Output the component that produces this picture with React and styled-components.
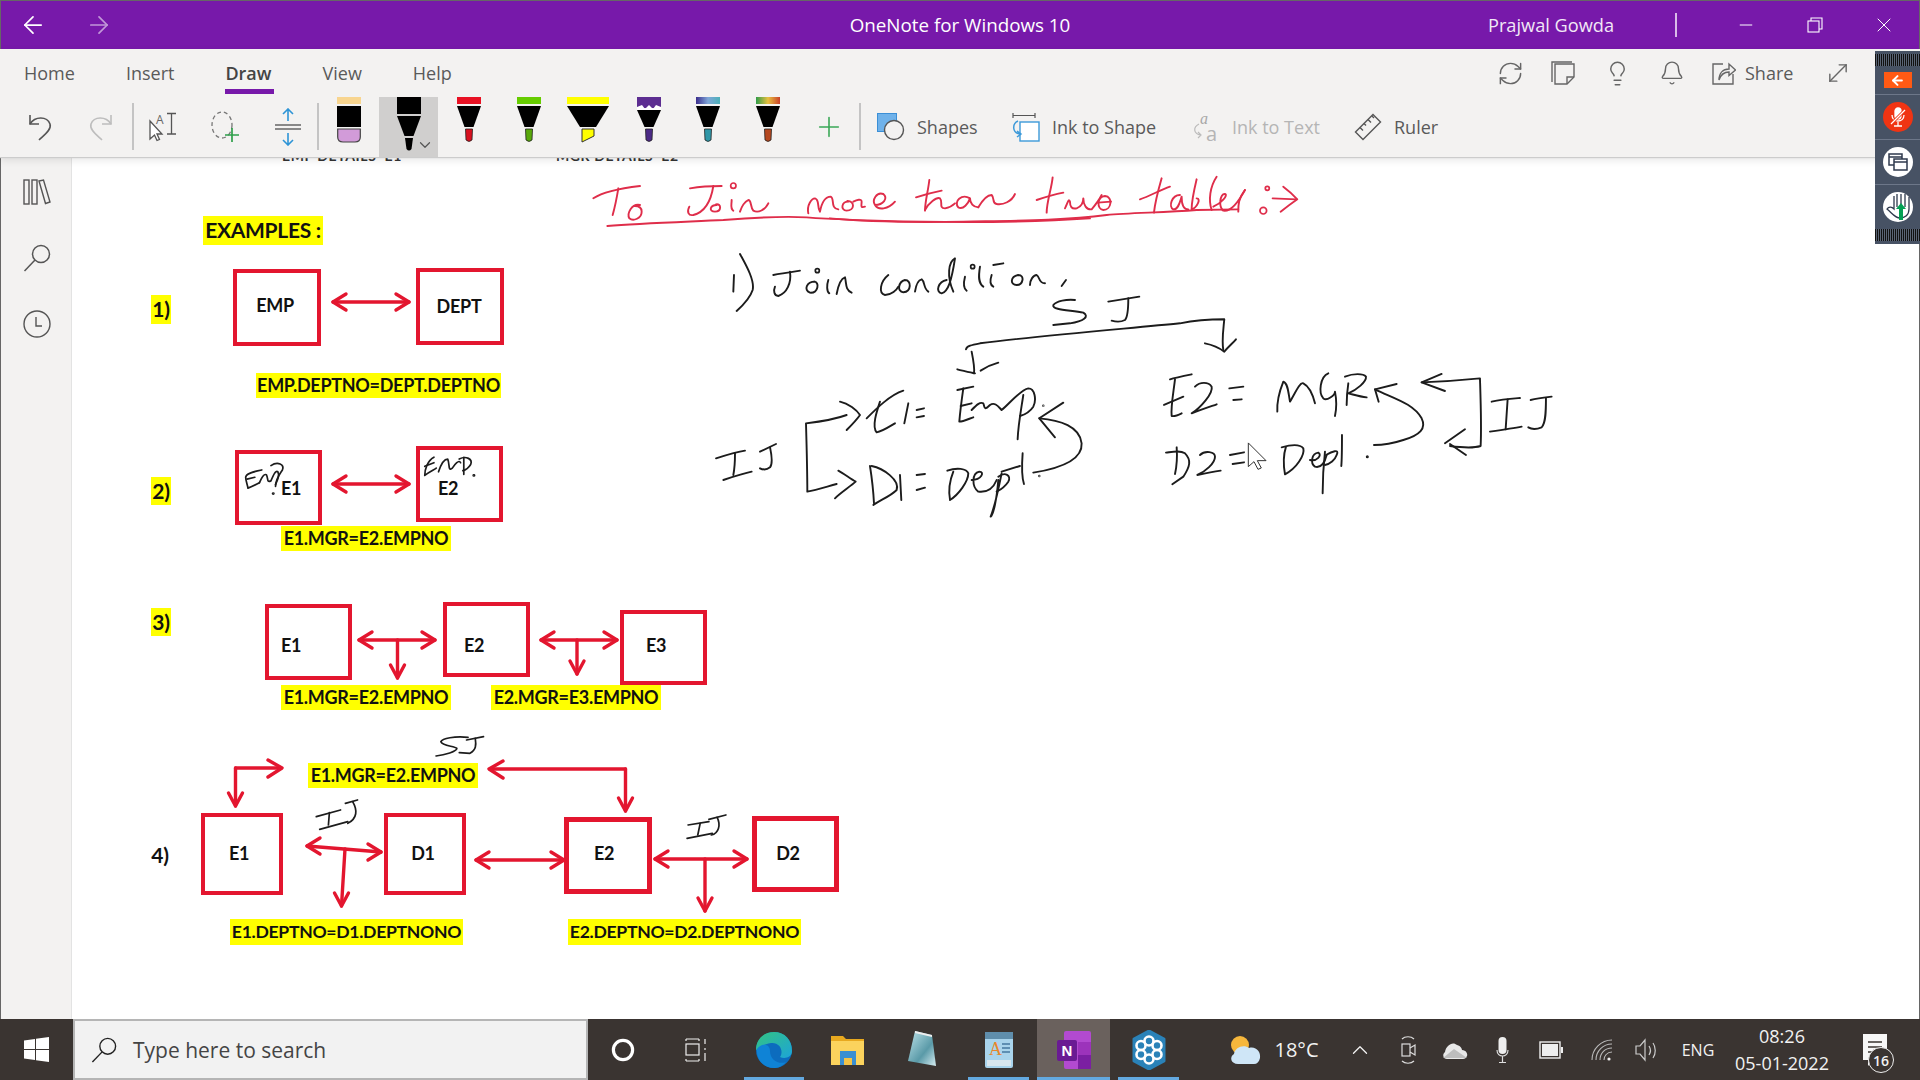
import React from 'react';
import styled, { createGlobalStyle } from 'styled-components';
import { Bell, Lightbulb, RefreshCw, ArrowLeft, ArrowRight, Minus, X, Plus, ChevronDown, ChevronUp, MoveDiagonal } from 'lucide-react';

const UI_FONT = '"Open Sans", "Noto Sans", sans-serif';
const NOTE_FONT = 'Lato, "Liberation Sans", sans-serif';
const RED = '#e3162f';

const GlobalStyle = createGlobalStyle`
  html, body { margin: 0; padding: 0; background: #fff; }
  * { box-sizing: border-box; }
`;

const Win = styled.div`
  position: relative;
  width: 1920px;
  height: 1080px;
  display: flex;
  flex-direction: column;
  overflow: hidden;
  font-family: ${UI_FONT};
  &::after {
    content: '';
    position: absolute;
    inset: 0 0 61px 0;
    border: 1px solid #666;
    border-bottom: 0;
    pointer-events: none;
  }
`;

/* title bar */
const TitleBar = styled.div`
  position: relative;
  height: 49px;
  flex: none;
  background: #7719aa;
  color: #fff;
  display: flex;
  align-items: center;
`;
const NavBtn = styled.div`
  width: ${p => p.$w}px;
  margin-left: ${p => p.$ml || 0}px;
  display: flex;
  justify-content: center;
  opacity: ${p => p.$dim ? 0.55 : 1};
`;
const AppName = styled.div`
  position: absolute;
  left: 0;
  right: 0;
  top: 0;
  bottom: 0;
  display: flex;
  align-items: center;
  justify-content: center;
  font-size: 18.8px;
`;
const UserName = styled.div`
  margin-left: auto;
  font-size: 18.2px;
  width: 126px;
  white-space: nowrap;
  opacity: 0.9;
`;
const TitleSep = styled.div`
  width: 2px;
  height: 24px;
  margin-left: 61px;
  background: #d9bbe8;
`;
const WinBtn = styled.div`
  width: ${p => p.$w}px;
  display: flex;
  justify-content: center;
`;

/* ribbon */
const Ribbon = styled.div`
  position: relative;
  z-index: 3;
  flex: none;
  background: #f3f2f1;
  box-shadow: 0 1px 1px #ccc, 0 3px 8px rgba(0, 0, 0, 0.1);
`;
const TabRow = styled.div`
  height: 48px;
  display: flex;
  align-items: center;
  padding-left: 24px;
  gap: 51px;
`;
const Tab = styled.div`
  position: relative;
  font-size: 18px;
  color: ${p => p.$active ? '#444' : '#5a5a5a'};
  font-weight: ${p => p.$active ? 600 : 400};
  ${p => p.$active && `
    &::after {
      content: '';
      position: absolute;
      left: 0;
      right: -2px;
      top: 28px;
      height: 5px;
      background: #7719aa;
    }
  `}
`;
const RibbonActions = styled.div`
  margin-left: auto;
  display: flex;
  align-items: center;
  margin-right: 37px;
`;
const ActionIcon = styled.div`
  width: ${p => p.$w}px;
  display: flex;
  justify-content: center;
  color: #666;
`;
const ShareText = styled.div`
  font-size: 18px;
  color: #5a5a5a;
  margin-left: 8px;
  width: 48px;
  white-space: nowrap;
`;
const ToolRow = styled.div`
  height: 60px;
  display: flex;
  align-items: stretch;
  padding-left: 10px;
`;
const Slot = styled.div`
  position: relative;
  flex: none;
  width: ${p => p.$w}px;
  display: flex;
  align-items: center;
  justify-content: center;
`;
const PenSlot = styled(Slot)`
  align-items: flex-start;
  background: ${p => p.$selected ? '#d0cfce' : 'transparent'};
`;
const PenChevron = styled.div`
  position: absolute;
  right: 4px;
  bottom: 3px;
  color: #555;
  display: flex;
`;
const ToolSep = styled.div`
  flex: none;
  width: 2px;
  height: 47px;
  margin-top: 6px;
  background: #c4c4c4;
`;
const TextTool = styled.div`
  flex: none;
  width: ${p => p.$w}px;
  padding-left: 16px;
  display: flex;
  align-items: center;
  gap: 12px;
  font-size: 18px;
  white-space: nowrap;
  color: ${p => p.$off ? '#b5b5b5' : '#5a5a5a'};
  svg { overflow: visible; }
`;

/* body */
const Body = styled.div`
  flex: 1;
  min-height: 0;
  display: flex;
`;
const Rail = styled.div`
  flex: none;
  width: 72px;
  background: #f3f2f1;
  border-right: 1px solid #e3e3e3;
  display: flex;
  flex-direction: column;
  align-items: center;
  padding: 20px 0 0 2px;
  gap: 36px;
  color: #555;
`;
const RailIcon = styled.div`
  height: 30px;
  display: flex;
  align-items: center;
`;
const Canvas = styled.div`
  position: relative;
  flex: 1;
  background: #fff;
  overflow: hidden;
`;
const at = p => `left: ${p.$x - 72}px; top: ${p.$y - 157}px;`;
const ClippedTitle = styled.div`
  position: absolute;
  ${at}
  font: 700 14px ${NOTE_FONT};
  letter-spacing: 0.6px;
  color: #333;
  white-space: pre;
`;
const Box = styled.div`
  position: absolute;
  ${at}
  width: ${p => p.$w}px;
  height: ${p => p.$h}px;
  border: ${p => p.$b || 4}px solid ${RED};
`;
const Mark = styled.div`
  position: absolute;
  ${at}
  width: ${p => p.$w}px;
  height: ${p => p.$h}px;
  padding-bottom: 2px;
  background: ${p => p.$plain ? 'transparent' : '#ffff00'};
  color: #111;
  display: flex;
  align-items: center;
  justify-content: center;
  white-space: nowrap;
  font: 700 ${p => p.$fs || 18}px ${NOTE_FONT};
  letter-spacing: -0.3px;
`;
const InkLayer = styled.svg`
  position: absolute;
  left: 0;
  top: 0;
  width: 100%;
  height: 100%;
`;
const InkGroup = styled.g`
  path {
    fill: none;
    stroke: ${p => p.$c || '#1c1c1c'};
    stroke-width: ${p => p.$sw || 1.9}px;
    stroke-linecap: round;
    stroke-linejoin: round;
    vector-effect: non-scaling-stroke;
  }
  circle {
    fill: none;
    stroke: ${p => p.$c || '#1c1c1c'};
    stroke-width: 1.7px;
    vector-effect: non-scaling-stroke;
  }
`;

/* floating meeting panel */
const MeetPanel = styled.div`
  position: absolute;
  z-index: 5;
  left: 1875px;
  top: 51px;
  width: 45px;
  height: 193px;
  background: #475264;
  display: flex;
  flex-direction: column;
  align-items: center;
`;
const Grip = styled.div`
  flex: none;
  width: 100%;
  height: 12px;
  margin: ${p => p.$m};
  background: repeating-linear-gradient(90deg, #111 0 1px, #5a6475 1px 2px);
`;
const PanelRow = styled.div`
  flex: none;
  width: 100%;
  height: ${p => p.$h}px;
  display: flex;
  align-items: center;
  justify-content: center;
  border-bottom: ${p => p.$last ? 0 : '1px solid #6d7789'};
`;
const BackBtn = styled.div`
  width: 28px;
  height: 16px;
  background: #ff5a14;
  color: #fff;
  display: flex;
  align-items: center;
  justify-content: center;
`;
const RoundBtn = styled.div`
  width: 30px;
  height: 30px;
  border-radius: 50%;
  background: ${p => p.$red ? '#f03413' : '#fff'};
  display: flex;
  align-items: center;
  justify-content: center;
`;

/* taskbar */
const Taskbar = styled.div`
  flex: none;
  height: 61px;
  background: #3a3431;
  display: flex;
  align-items: stretch;
  color: #f2f2f2;
`;
const SearchBox = styled.div`
  flex: none;
  width: 515px;
  background: #f2f2f2;
  border: 2px solid #b5b5b5;
  display: flex;
  align-items: center;
  padding-left: 16px;
  gap: 16px;
  font-size: 21px;
  color: #444;
`;
const TaskItem = styled.div`
  position: relative;
  flex: none;
  width: ${p => p.$w}px;
  margin-left: ${p => p.$ml || 0}px;
  display: flex;
  align-items: center;
  justify-content: center;
  background: ${p => p.$active ? '#6a615d' : 'transparent'};
  ${p => p.$open && `
    &::after {
      content: '';
      position: absolute;
      left: 0;
      right: 0;
      bottom: 0;
      height: 3px;
      background: #63a9e0;
    }
  `}
`;
const TrayText = styled.div`
  font-size: ${p => p.$fs || 16}px;
  white-space: nowrap;
`;
const ClockBox = styled.div`
  display: flex;
  flex-direction: column;
  align-items: center;
  gap: 7px;
  font-size: 18px;
  line-height: 20px;
  white-space: nowrap;
`;
const NotifBadge = styled.div`
  position: absolute;
  left: 18px;
  top: 28px;
  width: 26px;
  height: 26px;
  border-radius: 50%;
  background: #3a3431;
  border: 1.5px solid #eee;
  font-size: 14px;
  font-weight: 600;
  display: flex;
  align-items: center;
  justify-content: center;
`;

/* drawings */
const Pen = ({ band, tip, wide, tall, zig }) => {
  const w = wide ? 42 : 24;
  const c = w / 2;
  const top = tall ? 19 : zig ? 13 : 9;
  const neck = tall ? 39 : 30;
  const half = wide ? 8 : 4.5;
  return (
    <svg width={w} height={tall ? 56 : 46} viewBox={`0 0 ${w} ${tall ? 56 : 46}`}>
      <rect x="0" y="0" width={w} height={top - 2} fill={band} />
      {zig && <path d={`M0 10 L5 8 L8 12 L12 8 L16 12 L19 8 L24 10 L24 13 L0 13Z`} fill="#fff" />}
      <path d={`M0 ${top} H${w} L${c + half} ${neck} H${c - half} Z`} fill="#000" />
      {tall
        ? <path d={`M${c - 4} ${neck + 2} H${c + 4} L${c + 2.5} 52 Q${c} 55 ${c - 2.5} 52 Z`} fill="#000" />
        : wide
          ? <path d={`M${c - 6} 32 H${c + 6} V39 L${c - 6} 45 Z`} fill={tip} stroke="#333" strokeWidth="1" />
          : <path d={`M${c - 3.5} 32 H${c + 3.5} L${c + 3} 43 Q${c} 46 ${c - 3} 43 Z`} fill={tip} stroke="#222" strokeWidth="0.8" />}
    </svg>
  );
};

const Eraser = () => (
  <svg width="24" height="46" viewBox="0 0 24 46">
    <rect x="0" y="0" width="24" height="7" fill="#f8d58f" />
    <rect x="0" y="9" width="24" height="21" fill="#000" />
    <path d="M0.7 32 H23.3 V40 Q23.3 45 18 45 H6 Q0.7 45 0.7 40 Z" fill="#d29bd9" stroke="#444" strokeWidth="1.2" />
  </svg>
);

const UndoIcon = ({ color, flip }) => (
  <svg width="24" height="28" viewBox="0 0 24 28" fill="none" stroke={color} strokeWidth="1.6" style={flip ? { transform: 'scaleX(-1)' } : undefined}>
    <path d="M2 2 V11 H11" />
    <path d="M2 11 C7 3 19 3 22 11 C24 17 15 23 11 27" />
  </svg>
);

const LassoText = () => (
  <svg width="30" height="30" viewBox="0 0 30 30" fill="none" stroke="#555" strokeWidth="1.3">
    <path d="M2 9 V27 L6.5 23 L9 28.5 L11.5 27.5 L9 22 L14 22 Z" fill="#fff" />
    <text x="8" y="12" fontSize="12" fill="#666" stroke="none" fontFamily="Open Sans">A</text>
    <path d="M19 1.5 H28 M23.5 1.5 V22 M19 22 H28" />
  </svg>
);

const LassoAdd = () => (
  <svg width="30" height="32" viewBox="0 0 30 32" fill="none">
    <ellipse cx="12" cy="14" rx="10" ry="13" stroke="#777" strokeWidth="1.3" strokeDasharray="4 3" />
    <path d="M22 17 V31 M15 24 H29" stroke="#2ea04b" strokeWidth="1.7" />
  </svg>
);

const SpaceIcon = () => (
  <svg width="28" height="38" viewBox="0 0 28 38" fill="none">
    <path d="M14 1 V13 M9 6 L14 1 L19 6 M14 25 V37 M9 32 L14 37 L19 32" stroke="#2d94d6" strokeWidth="1.6" />
    <path d="M1 17 H27 M1 21 H27" stroke="#666" strokeWidth="1.7" />
  </svg>
);

const ShapesIcon = () => (
  <svg width="28" height="28" viewBox="0 0 28 28">
    <rect x="0.5" y="0.5" width="19" height="18" fill="#6fb2ea" stroke="#3b8fd6" />
    <circle cx="17" cy="17" r="9.5" fill="#f3f2f1" stroke="#555" strokeWidth="1.4" />
  </svg>
);

const InkShapeIcon = () => (
  <svg width="28" height="30" viewBox="0 0 28 30" fill="none">
    <path d="M1 1 V6 M23 1 V6 M1 3.5 H23" stroke="#555" strokeWidth="1.2" />
    <rect x="8" y="10" width="19" height="19" fill="#fff" stroke="#3d9ad9" strokeWidth="1.4" />
    <path d="M6 9 C0 12 0 21 8 22 M5 19 L9 22 L5 25" stroke="#3d9ad9" strokeWidth="1.5" />
  </svg>
);

const InkTextIcon = () => (
  <svg width="28" height="30" viewBox="0 0 28 30" fill="none">
    <text x="8" y="12" fontSize="16" fontStyle="italic" fill="#a8a8a8" fontFamily="Liberation Serif">a</text>
    <text x="14" y="29" fontSize="20" fill="#b5b5b5" fontFamily="Open Sans">a</text>
    <path d="M7 12 C1 15 1 22 9 23 M6 20 L9 23 L6 26" stroke="#bbb" strokeWidth="1.2" />
  </svg>
);

const RulerIcon = () => (
  <svg width="28" height="28" viewBox="0 0 28 28" fill="none" stroke="#555" strokeWidth="1.4">
    <path d="M1.5 19 L19 1.5 L26.5 9 L9 26.5 Z" />
    <path d="M6 14.5 L9 17.5 M10 10.5 L12 12.5 M14 6.5 L17 9.5 M18 3 L20 5" />
  </svg>
);

const StickyIcon = () => (
  <svg width="24" height="24" viewBox="0 0 24 24" fill="none" stroke="#666" strokeWidth="1.4">
    <path d="M4 3 H23 V16 L16 23 H4 Z" />
    <path d="M16 23 V16 H23" />
    <path d="M1 21 V1 H21" />
  </svg>
);

const ShareIcon = () => (
  <svg width="24" height="24" viewBox="0 0 24 24" fill="none" stroke="#666" strokeWidth="1.4">
    <path d="M11 3 H1 V23 H21 V13" />
    <path d="M7 19 C7 12 11 8 17 8 V3 L23.5 9 L17 14.5 V11 C13 11 9 13 7 19 Z" fill="#f3f2f1" />
  </svg>
);

const LibraryIcon = () => (
  <svg width="28" height="26" viewBox="0 0 28 26" fill="none" stroke="#555" strokeWidth="1.4">
    <rect x="1" y="1" width="5" height="24" />
    <rect x="9" y="1" width="5" height="24" />
    <path d="M16 2 L20.5 1 L27 23 L22.5 24.5 Z" />
  </svg>
);

const SearchGlass = ({ size = 28, color = '#555' }) => (
  <svg width={size} height={size} viewBox="0 0 28 28" fill="none" stroke={color} strokeWidth="1.5">
    <circle cx="18" cy="10" r="8.5" />
    <path d="M12 16 L1.5 27" />
  </svg>
);

const ClockIcon = () => (
  <svg width="28" height="28" viewBox="0 0 28 28" fill="none" stroke="#555" strokeWidth="1.4">
    <circle cx="14" cy="14" r="13" />
    <path d="M13 7 V16 H19" />
  </svg>
);

const MicOff = () => (
  <svg width="20" height="20" viewBox="0 0 20 20" fill="none" stroke="#fff" strokeWidth="1.3">
    <rect x="7" y="1" width="6" height="11" rx="3" fill="#fff" />
    <path d="M4 8 C4 16 16 16 16 8 M10 15 V19 M6 19 H14" />
    <path d="M3 17 L17 3" stroke="#f03413" strokeWidth="3" />
    <path d="M3 17 L17 3" />
  </svg>
);

const WindowsIcon = () => (
  <svg width="20" height="18" viewBox="0 0 20 18" fill="none" stroke="#2f3a4d" strokeWidth="1.5">
    <rect x="1" y="1" width="13" height="11" />
    <rect x="6" y="6" width="13" height="11" fill="#fff" />
    <path d="M6 9 H19 M1 4 H14" />
  </svg>
);

const HandIcon = () => (
  <svg width="26" height="28" viewBox="0 0 26 28" fill="none">
    <path d="M12 1 V14 M16 1 V14 M20 1 V14 M24 4 V16 C24 22 20 25 15 25 C10 25 7 20 2 16 C4 13 7 14 9 16 V3" stroke="#2f3a4d" strokeWidth="1.3" />
    <path d="M16 10 L21 16 H18 V27 H14 V16 H11 Z" fill="#04a054" />
  </svg>
);

const WinLogo = () => (
  <svg width="25" height="25" viewBox="0 0 25 25" fill="#fff">
    <path d="M0 3.6 L11 2 V12 H0 Z M12 1.8 L25 0 V12 H12 Z M0 13 H11 V23 L0 21.4 Z M12 13 H25 V25 L12 23.2 Z" />
  </svg>
);

const CortanaRing = () => (
  <svg width="24" height="24" viewBox="0 0 24 24" fill="none" stroke="#fff" strokeWidth="3.2">
    <circle cx="12" cy="12" r="9.6" />
  </svg>
);

const TaskViewIcon = () => (
  <svg width="26" height="24" viewBox="0 0 26 24" fill="none" stroke="#eee" strokeWidth="1.2">
    <rect x="4" y="6" width="13" height="11" />
    <path d="M4 1 H17 M4 3 V1 M17 3 V1 M4 23 H17 M4 21 V23 M17 21 V23 M23 1 V6 M23 10 V12 M23 15 V23" />
  </svg>
);

const EdgeIcon = () => (
  <svg width="38" height="38" viewBox="0 0 38 38">
    <defs>
      <linearGradient id="edgeA" x1="0" y1="0" x2="1" y2="1">
        <stop offset="0" stopColor="#33c481" />
        <stop offset="1" stopColor="#1da4d8" />
      </linearGradient>
    </defs>
    <circle cx="19" cy="19" r="18" fill="#0c6cbe" />
    <path d="M1 19 C1 7 10 1 19 1 C30 1 37 9 37 20 C37 27 29 28 25 26 C29 20 25 11 16 12 C8 13 3 18 1 19 Z" fill="url(#edgeA)" />
    <path d="M15 20 C15 29 24 34 31 31 C27 36 22 37 19 37 C9 37 1 29 2 18 C6 12 15 12 15 20 Z" fill="#0f83d6" />
  </svg>
);

const FolderIcon = () => (
  <svg width="34" height="32" viewBox="0 0 34 32">
    <path d="M0 2 H12 L15 5 H33 V31 H0 Z" fill="#e8a91f" />
    <rect x="0" y="7" width="33" height="24" fill="#fbd35d" />
    <rect x="9" y="17" width="16" height="14" fill="#3a8fd2" />
    <rect x="13" y="24" width="8" height="7" fill="#f3c347" />
  </svg>
);

const NoteIcon = () => (
  <svg width="32" height="40" viewBox="0 0 32 40">
    <defs>
      <linearGradient id="noteA" x1="0" y1="0" x2="1" y2="1">
        <stop offset="0" stopColor="#bfe4ea" />
        <stop offset="0.6" stopColor="#5a9aa8" />
        <stop offset="1" stopColor="#d8eef2" />
      </linearGradient>
    </defs>
    <path d="M10 1 L27 5 L31 36 L3 31 Z" fill="url(#noteA)" />
    <path d="M10 1 L27 5 L27 7 L10 3 Z" fill="#eee" />
  </svg>
);

const WordpadIcon = () => (
  <svg width="32" height="40" viewBox="0 0 32 40">
    <rect x="2" y="2" width="28" height="36" rx="2" fill="#a9d4ec" />
    <rect x="2" y="2" width="28" height="7" fill="#5f8eac" />
    <rect x="4" y="30" width="24" height="6" fill="#d8e6ee" />
    <text x="6" y="25" fontSize="18" fontFamily="Liberation Serif" fill="#e8872a">A</text>
    <path d="M19 14 H27 M19 18 H27 M19 22 H27" stroke="#4678a0" strokeWidth="1.4" />
  </svg>
);

const OneNoteIcon = () => (
  <svg width="36" height="40" viewBox="0 0 36 40">
    <rect x="8" y="1" width="27" height="38" rx="2" fill="#b24ad0" />
    <rect x="22" y="12" width="13" height="13" fill="#9c33bb" />
    <rect x="22" y="25" width="13" height="14" fill="#7b1fa2" />
    <rect x="1" y="10" width="20" height="21" rx="2" fill="#6a1b93" />
    <text x="11" y="26" fontSize="15" fontWeight="700" textAnchor="middle" fontFamily="Liberation Sans" fill="#fff">N</text>
  </svg>
);

const FlowerIcon = () => (
  <svg width="36" height="40" viewBox="0 0 36 40">
    <path d="M18 1 L33 9 V31 L18 39 L3 31 V9 Z" fill="#2a82b8" stroke="#2a82b8" strokeWidth="3" strokeLinejoin="round" />
    <g fill="none" stroke="#fff" strokeWidth="2.6">
      <circle cx="18" cy="11" r="4.5" />
      <circle cx="18" cy="29" r="4.5" />
      <circle cx="10" cy="15.5" r="4.5" />
      <circle cx="26" cy="15.5" r="4.5" />
      <circle cx="10" cy="24.5" r="4.5" />
      <circle cx="26" cy="24.5" r="4.5" />
    </g>
  </svg>
);

const WeatherIcon = () => (
  <svg width="32" height="30" viewBox="0 0 32 30">
    <circle cx="11" cy="10" r="9" fill="#f6b73c" />
    <path d="M9 29 C2 29 0 22 5 19 C6 12 15 9 20 13 C27 11 32 17 31 23 C30 27 28 29 25 29 Z" fill="#cfe6f7" />
  </svg>
);

const MeetIcon = () => (
  <svg width="18" height="30" viewBox="0 0 18 30" fill="none" stroke="#ddd" strokeWidth="1.2">
    <path d="M3 4 C6 1 12 1 15 4 M3 26 C6 29 12 29 15 26" />
    <rect x="3" y="9" width="8" height="12" />
    <path d="M11 13 L16 10 V20 L11 17" />
  </svg>
);

const CloudIcon = () => (
  <svg width="26" height="20" viewBox="0 0 26 20">
    <path d="M5 19 C1 19 0 14 3 12 C4 5 11 1 15 5 C19 6 20 9 20 10 C24 10 26 14 25 16 C24 18 23 19 21 19 Z" fill="#e8e8e8" />
    <path d="M1 18 L12 9 L25 18 Z" fill="#bdbdbd" />
  </svg>
);

const MicIcon = () => (
  <svg width="13" height="26" viewBox="0 0 13 26">
    <rect x="2.5" y="0" width="8" height="17" rx="4" fill="#eee" />
    <path d="M1 13 C1 21 12 21 12 13 M6.5 19 V25.5 M3 25.5 H10" fill="none" stroke="#ddd" strokeWidth="1.2" />
  </svg>
);

const BatteryIcon = () => (
  <svg width="24" height="18" viewBox="0 0 24 18">
    <rect x="1" y="1" width="20" height="16" fill="none" stroke="#eee" strokeWidth="1.4" />
    <rect x="3" y="3" width="16" height="12" fill="#eee" />
    <rect x="22" y="6" width="2" height="6" fill="#eee" />
  </svg>
);

const WifiIcon = () => (
  <svg width="24" height="24" viewBox="0 0 24 24" fill="none" stroke="#bbb" strokeWidth="1.1">
    <path d="M2 22 C2 11 11 2 22 2 M6 22 C6 13 13 6 22 6 M10 22 C10 15 15 10 22 10" />
    <path d="M14 22 C14 18 17 14 22 14" />
    <circle cx="19" cy="21" r="1.6" fill="#eee" stroke="none" />
  </svg>
);

const VolumeIcon = () => (
  <svg width="26" height="26" viewBox="0 0 26 26" fill="none" stroke="#ccc" strokeWidth="1.2">
    <path d="M2 9 H6 L11 3 V23 L6 17 H2 Z" />
    <path d="M15 9 C17 12 17 15 15 18 M19 6 C22 10 22 17 19 21" />
  </svg>
);

const NotifIcon = () => (
  <svg width="24" height="32" viewBox="0 0 24 32">
    <path d="M0 0 H24 V26 H10 L5 32 V26 H0 Z" fill="#f7f7f7" />
    <path d="M5 8 H19 M5 13 H19 M5 18 H15" stroke="#3a3431" strokeWidth="1.4" />
  </svg>
);

/* diagram data, all in page pixels */
const BOXES = [
  { x: 233, y: 269, w: 88, h: 77 }, { x: 416, y: 268, w: 88, h: 77 },
  { x: 235, y: 450, w: 87, h: 75 }, { x: 416, y: 446, w: 87, h: 76 },
  { x: 265, y: 604, w: 87, h: 76 }, { x: 443, y: 602, w: 87, h: 75 }, { x: 620, y: 610, w: 87, h: 75 },
  { x: 201, y: 813, w: 82, h: 82 }, { x: 384, y: 813, w: 82, h: 82 },
  { x: 564, y: 817, w: 88, h: 77, b: 5 }, { x: 752, y: 816, w: 87, h: 76, b: 5 },
];
const MARKS = [
  { t: 'EXAMPLES :', x: 203, y: 216, w: 120, h: 29, fs: 21 },
  { t: '1)', x: 151, y: 295, w: 20, h: 29, fs: 21 },
  { t: '2)', x: 151, y: 477, w: 20, h: 28, fs: 21 },
  { t: '3)', x: 151, y: 608, w: 20, h: 28, fs: 21 },
  { t: 'EMP.DEPTNO=DEPT.DEPTNO', x: 256, y: 373, w: 245, h: 25 },
  { t: 'E1.MGR=E2.EMPNO', x: 281, y: 526, w: 170, h: 25 },
  { t: 'E1.MGR=E2.EMPNO', x: 281, y: 685, w: 170, h: 25 },
  { t: 'E2.MGR=E3.EMPNO', x: 491, y: 685, w: 170, h: 25 },
  { t: 'E1.MGR=E2.EMPNO', x: 308, y: 763, w: 170, h: 25 },
  { t: 'E1.DEPTNO=D1.DEPTNONO', x: 230, y: 919, w: 233, h: 26, fs: 17.6 },
  { t: 'E2.DEPTNO=D2.DEPTNONO', x: 568, y: 919, w: 233, h: 26, fs: 17.6 },
  { t: 'EMP', x: 255, y: 296, w: 40, h: 20, plain: 1 },
  { t: 'DEPT', x: 437, y: 297, w: 44, h: 20, plain: 1 },
  { t: 'E1', x: 279, y: 479, w: 24, h: 20, plain: 1 },
  { t: 'E2', x: 436, y: 479, w: 24, h: 20, plain: 1 },
  { t: 'E1', x: 279, y: 636, w: 24, h: 20, plain: 1 },
  { t: 'E2', x: 462, y: 636, w: 24, h: 20, plain: 1 },
  { t: 'E3', x: 644, y: 636, w: 24, h: 20, plain: 1 },
  { t: '4)', x: 150, y: 843, w: 20, h: 24, plain: 1, fs: 21 },
  { t: 'E1', x: 227, y: 844, w: 24, h: 20, plain: 1 },
  { t: 'D1', x: 411, y: 844, w: 24, h: 20, plain: 1 },
  { t: 'E2', x: 592, y: 844, w: 24, h: 20, plain: 1 },
  { t: 'D2', x: 776, y: 844, w: 24, h: 20, plain: 1 },
];

const dblArrow = (x1, y1, x2, y2, s = 13, h = 8) => [
  `M${x1} ${y1} L${x2} ${y2}`,
  `M${x1 + s} ${y1 - h} L${x1} ${y1} L${x1 + s} ${y1 + h}`,
  `M${x2 - s} ${y2 - h} L${x2} ${y2} L${x2 - s} ${y2 + h}`,
];
const downTo = (x1, y1, x2, y2, h = 7, s = 13) => [
  `M${x1} ${y1} L${x2} ${y2}`,
  `M${x2 - h} ${y2 - s} L${x2} ${y2} L${x2 + h} ${y2 - s}`,
];

const RED_ARROWS = [
  ...dblArrow(333, 302, 409, 302),
  ...dblArrow(333, 484, 409, 484),
  ...dblArrow(359, 640, 435, 640),
  ...downTo(397.5, 640, 397.5, 678),
  ...dblArrow(541, 640, 617, 640),
  ...downTo(577, 640, 577, 674),
  'M235.5 768 L281 768', 'M268 760 L282 768 L268 777',
  ...downTo(235.5, 768, 235.5, 806),
  'M490 769 L625.5 769', 'M503 761 L489 769 L503 778',
  ...downTo(625.5, 769, 625.5, 811),
  ...dblArrow(307, 846, 381, 852),
  ...downTo(345, 849, 341.5, 906),
  ...dblArrow(476, 860, 564, 860),
  ...dblArrow(655, 859, 747, 859),
  ...downTo(705, 859, 705, 911),
];

// ink traced from the note, each list in its own local scale
const TITLE_A = [
  'M10 85 C40 65 90 55 150 48', 'M85 55 C80 85 75 110 68 135',
  'M150 105 C125 100 110 130 118 145 C130 155 155 145 155 125 C155 115 150 108 135 108',
  'M300 55 C330 50 365 48 395 48', 'M370 48 C365 80 350 125 310 135 C295 138 290 125 298 110',
  'M380 105 C360 105 355 125 375 125 C395 125 395 100 378 103',
  'M425 90 C425 105 420 115 430 122',
  'M450 125 C455 110 465 95 475 90 C485 90 480 110 490 122 C505 130 525 120 535 100',
  'M655 130 C650 105 665 85 675 85 C690 90 680 110 690 125 C695 100 705 80 722 80 C735 85 720 115 745 118',
  'M775 95 C755 95 750 120 770 122 C795 122 795 92 772 93',
  'M790 95 C800 90 815 85 815 95 C815 105 810 115 825 110',
  'M855 105 C880 105 895 85 880 72 C860 65 845 90 855 105 C865 122 895 118 915 95',
  'M52 168 C150 160 300 155 400 150 C500 142 580 138 650 142 C750 150 850 152 1000 155 C1200 158 1350 155 1500 145',
];
const TITLE_B = [
  'M258 82 C290 72 320 65 335 62', 'M298 30 C295 60 285 95 285 122',
  'M285 120 C295 100 320 80 330 85 C340 95 325 115 345 115 C360 112 370 105 375 100',
  'M420 85 C395 70 370 95 385 112 C400 120 415 100 420 85 C420 100 430 112 445 112',
  'M445 112 C455 95 470 75 485 75 C495 85 485 100 500 102 C520 105 545 95 555 72',
  'M620 90 C650 80 680 72 700 68', 'M668 22 C665 55 650 95 650 128',
  'M705 115 C715 95 715 85 720 95 C720 110 725 118 740 115 C755 110 760 95 760 85 C760 105 770 120 785 118 C800 100 810 85 815 75',
  'M825 78 C800 80 800 118 820 120 C845 120 850 80 825 78', 'M803 98 L843 95',
  'M930 88 C960 78 990 60 1020 50', 'M995 25 C985 60 975 100 972 128',
  'M1050 75 C1025 75 1015 110 1030 118 C1045 120 1050 95 1055 80 C1055 100 1060 118 1075 118',
  'M1100 28 C1090 70 1085 100 1085 118 C1100 115 1115 85 1100 85',
  'M1160 20 C1140 50 1135 90 1145 120',
  'M1150 110 C1175 100 1195 75 1185 72 C1170 70 1165 110 1180 122 C1195 125 1215 115 1245 60',
  'M1225 125 C1225 105 1225 85 1245 60',
  'M0 145 C100 155 200 158 400 155 C550 152 700 152 830 135 C900 128 1000 128 1100 120 L1225 118',
  'M1328 85 L1400 88', 'M1360 50 C1380 65 1395 80 1402 88 C1385 100 1365 115 1352 125',
];
const COND_A = [
  'M432 315 L430 365', 'M450 252 C465 280 495 330 488 360 C480 385 460 405 440 423',
  'M550 315 C575 310 610 305 630 302', 'M600 305 C605 340 590 370 565 378 C552 378 550 362 555 350',
  'M675 335 C650 335 640 360 660 368 C685 370 690 335 672 335',
  'M715 330 C710 345 710 365 718 370',
  'M740 372 C745 345 755 325 765 322 C770 340 765 360 785 368',
];
const COND_B = [
  'M175 315 C150 335 145 370 165 375 C185 375 200 360 205 350',
  'M225 330 C205 335 200 365 220 367 C245 365 245 330 225 330',
  'M255 365 C258 345 265 330 275 328 C285 335 280 355 295 365',
  'M350 330 C325 335 315 365 335 370 C355 365 365 330 375 265 C355 275 350 320 370 365',
  'M405 320 C400 340 400 355 410 362',
  'M450 290 C445 320 445 340 460 350', 'M490 285 L520 280',
  'M485 315 C480 330 480 345 490 350',
  'M565 315 C540 320 540 345 560 345 C580 345 585 315 565 315',
  'M600 345 C600 330 610 315 620 315 C630 320 625 340 645 340',
  'M708 330 L695 348',
  'M735 390 C710 388 680 392 670 405 C665 420 720 420 760 428 C780 440 760 455 720 460 L670 465',
  'M835 395 L928 380', 'M895 385 C895 410 895 440 885 450 C870 458 855 455 845 452',
  'M408 538 C410 528 425 525 450 520 C600 500 900 475 1050 460 C1090 452 1130 448 1183 448 C1180 480 1175 510 1180 540',
  'M1125 520 C1150 525 1170 535 1183 545 C1195 530 1210 518 1218 508',
];
const LEFT_SET = [
  'M815 35 C820 60 825 85 822 100', 'M772 88 C790 92 810 98 825 100', 'M842 92 C860 80 880 72 895 68',
  'M500 235 C530 205 570 165 610 152', 'M540 185 C530 215 515 260 530 277 C545 275 565 262 585 250',
  'M625 190 L613 250', 'M650 210 L672 205', 'M650 232 L672 228',
  'M772 150 L820 140', 'M790 145 C785 180 780 220 778 245 C790 245 810 235 820 232', 'M782 198 L815 190',
  'M815 210 C830 195 840 185 850 190 C855 200 850 215 870 195 C885 185 895 200 905 210 C925 195 960 150 985 145 C1005 145 1010 180 1000 200 C990 215 970 225 960 228',
  'M970 165 C965 200 955 250 953 298',
  'M1090 188 L1018 235 L1065 292', 'M1018 235 C1080 240 1140 260 1145 310 C1148 360 1080 385 1000 398',
  'M48 355 C80 345 115 335 135 332', 'M105 340 C105 370 102 395 100 405', 'M70 420 C100 410 130 400 155 395',
  'M180 335 L228 312', 'M210 322 C215 345 220 370 210 382 C200 390 190 390 180 385',
  'M440 225 C400 240 360 245 318 250 C320 320 322 400 322 455 C350 450 380 440 410 432',
  'M420 185 C445 190 470 210 480 225 C470 240 455 255 440 270',
  'M415 392 C430 400 450 415 467 425 C450 440 420 460 405 475',
  'M510 378 C515 410 520 450 522 490', 'M515 378 C550 385 600 420 590 450 C570 470 540 480 520 495',
  'M600 405 L604 480', 'M650 405 L675 402', 'M650 450 L675 443',
  'M760 395 C750 420 745 450 750 478', 'M742 392 C770 382 800 385 805 400 C805 425 775 465 750 480',
  'M815 420 C845 420 855 395 838 395 C815 400 815 440 835 455 C860 458 880 445 890 420',
  'M905 400 C895 450 880 510 872 530 C880 525 890 480 895 420',
  'M895 410 C915 395 935 405 925 425 C915 440 900 450 890 455',
  'M968 340 C965 380 965 410 972 432', 'M905 395 L960 378',
];
const RIGHT_SET = [
  'M155 103 C130 108 105 113 90 118', 'M105 118 C100 160 92 200 95 228 C105 230 115 225 125 220', 'M72 195 L130 170',
  'M165 140 C180 125 205 125 215 140 C220 160 180 205 155 220 C180 210 210 200 230 193',
  'M268 145 L310 140', 'M280 180 L305 178',
  'M412 215 C410 180 420 150 430 125 C445 130 445 160 450 185 C465 160 480 125 490 130 C510 140 520 170 525 190',
  'M565 100 C540 110 535 160 550 175 C560 185 585 165 585 155 C590 180 590 205 585 228',
  'M625 130 C622 150 620 175 620 195', 'M615 110 C640 100 670 100 678 110 C680 125 650 150 625 160 C645 165 660 170 680 172',
  'M770 132 L705 148 L716 185', 'M705 148 C760 175 820 190 845 235 C860 265 840 285 790 300 C760 310 730 315 702 315',
  'M905 102 L845 127 L915 153', 'M845 127 C900 125 970 120 1020 115 C1022 180 1025 260 1022 318 C1000 325 960 322 930 318',
  'M975 268 L915 310', 'M930 312 L978 345',
  'M1055 185 C1085 178 1115 176 1140 174', 'M1103 178 L1097 268', 'M1050 275 C1085 270 1120 265 1145 260',
  'M1172 180 C1195 175 1220 172 1235 170', 'M1218 175 C1218 210 1218 250 1205 262 C1190 268 1175 268 1165 262',
  'M78 338 C100 335 120 330 135 340 C155 360 150 380 130 410 L97 433', 'M110 322 C112 350 110 380 105 402',
  'M180 345 C195 330 225 335 225 350 C225 370 195 395 172 405 C195 400 220 395 242 392',
  'M270 345 L312 337', 'M278 372 L312 367',
  'M425 322 C450 315 480 312 490 325 C495 345 470 385 435 403 C430 375 430 345 438 320',
  'M510 360 C530 365 548 345 535 338 C515 340 510 370 525 380 C545 385 555 365 560 345',
  'M555 335 C550 380 548 420 548 460', 'M558 345 C575 335 600 325 590 345 C585 360 570 372 555 375',
  'M606 285 C606 320 606 355 604 378',
];
const BOX_NOTES = [
  'M570 880 C550 885 535 890 535 900 C535 910 540 925 540 930 C550 925 555 922 565 915', 'M538 905 L555 900',
  'M565 915 C570 900 575 890 580 893 C585 905 580 915 590 910 C595 895 600 880 605 885 C610 895 600 920 600 920',
  'M590 868 C605 855 620 865 615 880 C610 890 600 905 600 925',
  'M945 845 C930 855 925 880 925 895 C935 885 945 880 950 875', 'M925 870 L945 860',
  'M955 885 C960 865 968 850 975 850 C980 865 975 885 985 875 C990 865 1000 850 1003 860',
  'M1010 845 L1010 892', 'M1000 850 C1015 840 1030 850 1025 865 C1020 875 1015 880 1008 882',
];
const ROW4_NOTES = [
  'M718 52 C690 48 665 55 662 65 C665 78 690 78 695 85 C695 95 670 105 652 108',
  'M715 60 L750 50', 'M733 55 C735 75 735 90 722 100 L700 98',
  'M405 290 L455 270', 'M432 278 L430 315', 'M412 328 L470 305',
  'M465 250 L490 240', 'M480 245 C490 270 490 295 470 310',
  'M1172 315 L1215 305', 'M1197 310 L1192 345', 'M1170 355 L1222 340',
  'M1215 298 L1250 285', 'M1232 292 C1240 315 1235 340 1220 345',
];

const Strokes = ({ list }) => list.map((d, i) => <path key={i} d={d} />);

const NoteCanvas = () => (
  <Canvas>
    <ClippedTitle $x={282} $y={147}>EMP DETAILS  E1</ClippedTitle>
    <ClippedTitle $x={556} $y={147}>MGR DETAILS  E2</ClippedTitle>
    {BOXES.map((b, i) => <Box key={i} $x={b.x} $y={b.y} $w={b.w} $h={b.h} $b={b.b} />)}
    {MARKS.map((m, i) => (
      <Mark key={i} $x={m.x} $y={m.y} $w={m.w} $h={m.h} $plain={m.plain} $fs={m.fs}>{m.t}</Mark>
    ))}
    <InkLayer viewBox="72 157 1848 862">
      <InkGroup $c={RED} $sw={3.4}><Strokes list={RED_ARROWS} /></InkGroup>
      <InkGroup $c="#df2d4a" $sw={1.9}>
        <g transform="translate(590 170) scale(0.3333)">
          <Strokes list={TITLE_A} />
          <circle cx="430" cy="47" r="8" />
        </g>
        <g transform="translate(830 170) scale(0.3333)">
          <Strokes list={TITLE_B} />
          <circle cx="1312" cy="55" r="6" />
          <circle cx="1300" cy="122" r="10" />
        </g>
      </InkGroup>
      <InkGroup>
        <g transform="translate(590 170) scale(0.3333)">
          <Strokes list={COND_A} />
          <circle cx="682" cy="302" r="6" />
        </g>
        <g transform="translate(830 170) scale(0.3333)">
          <Strokes list={COND_B} />
          <circle cx="428" cy="290" r="6" />
        </g>
        <g transform="translate(700 340) scale(0.3333)">
          <Strokes list={LEFT_SET} />
          <circle cx="1030" cy="197" r="1" />
          <circle cx="1018" cy="408" r="1" />
        </g>
        <g transform="translate(1140 340) scale(0.3333)">
          <Strokes list={RIGHT_SET} />
          <circle cx="682" cy="350" r="2" />
          <path d="M325 310 L325 380 L342 365 L354 388 L364 384 L352 362 L377 362 Z" style={{ strokeWidth: 1, fill: '#fff', stroke: '#333' }} />
        </g>
      </InkGroup>
      <InkGroup $sw={1.7}>
        <g transform="translate(0 150) scale(0.4592 0.3636)">
          <Strokes list={BOX_NOTES} />
          <circle cx="595" cy="945" r="1.5" />
          <circle cx="1032" cy="895" r="1.5" />
        </g>
        <g transform="translate(120 720) scale(0.4847 0.3333)">
          <Strokes list={ROW4_NOTES} />
        </g>
      </InkGroup>
    </InkLayer>
  </Canvas>
);

const PENS = [
  { w: 61, band: '#e81123', tip: '#d8101f' },
  { w: 59, band: '#66cc00', tip: '#58a80a' },
  { w: 60, band: '#ffff00', tip: '#ffff00', wide: true },
  { w: 61, band: '#5c2d91', tip: '#4b2a86', zig: true },
  { w: 58, band: 'url(#penGalaxy)', tip: '#2f97a8' },
  { w: 62, band: 'url(#penRainbow)', tip: '#b5481f' },
];

const App = () => (
  <Win>
    <GlobalStyle />
    <TitleBar>
      <NavBtn $w={34} $ml={16}><ArrowLeft size={28} strokeWidth={1.5} /></NavBtn>
      <NavBtn $w={34} $ml={32} $dim><ArrowRight size={28} strokeWidth={1.5} /></NavBtn>
      <AppName>OneNote for Windows 10</AppName>
      <UserName>Prajwal Gowda</UserName>
      <TitleSep />
      <WinBtn $w={138}><Minus size={20} strokeWidth={1.2} /></WinBtn>
      <WinBtn $w={0}>
        <svg width="16" height="16" viewBox="0 0 16 16" fill="none" stroke="#fff" strokeWidth="1.1" style={{ flex: 'none' }}>
          <rect x="1" y="4" width="11" height="11" />
          <path d="M4 4 V1 H15 V12 H12" />
        </svg>
      </WinBtn>
      <WinBtn $w={69} />
      <WinBtn $w={0}><X size={24} strokeWidth={1} style={{ flex: 'none' }} /></WinBtn>
      <WinBtn $w={36} />
    </TitleBar>
    <Ribbon>
      <TabRow>
        <Tab>Home</Tab>
        <Tab>Insert</Tab>
        <Tab $active>Draw</Tab>
        <Tab>View</Tab>
        <Tab>Help</Tab>
        <RibbonActions>
          <ActionIcon $w={30}><RefreshCw size={27} strokeWidth={1.3} /></ActionIcon>
          <ActionIcon $w={76}><StickyIcon /></ActionIcon>
          <ActionIcon $w={32}><Lightbulb size={27} strokeWidth={1.3} /></ActionIcon>
          <ActionIcon $w={78}><Bell size={26} strokeWidth={1.3} /></ActionIcon>
          <ActionIcon $w={26}><ShareIcon /></ActionIcon>
          <ShareText>Share</ShareText>
          <ActionIcon $w={90}><MoveDiagonal size={28} strokeWidth={1.2} /></ActionIcon>
        </RibbonActions>
      </TabRow>
      <ToolRow>
        <svg width="0" height="0" style={{ position: 'absolute' }}>
          <defs>
            <linearGradient id="penGalaxy"><stop offset="0" stopColor="#3a2d8c" /><stop offset="0.5" stopColor="#7fa6d8" /><stop offset="1" stopColor="#4bb0b8" /></linearGradient>
            <linearGradient id="penRainbow"><stop offset="0" stopColor="#2f9c4a" /><stop offset="0.5" stopColor="#e8c040" /><stop offset="1" stopColor="#c8402a" /></linearGradient>
          </defs>
        </svg>
        <Slot $w={60}><UndoIcon color="#555" /></Slot>
        <Slot $w={62}><UndoIcon color="#bdbdbd" flip /></Slot>
        <ToolSep />
        <Slot $w={58}><LassoText /></Slot>
        <Slot $w={66}><LassoAdd /></Slot>
        <Slot $w={59}><SpaceIcon /></Slot>
        <ToolSep />
        <PenSlot $w={60}><Eraser /></PenSlot>
        <PenSlot $w={59} $selected>
          <Pen band="#000" tall />
          <PenChevron><ChevronDown size={18} strokeWidth={1.6} /></PenChevron>
        </PenSlot>
        {PENS.map((p, i) => (
          <PenSlot key={i} $w={p.w}><Pen band={p.band} tip={p.tip} wide={p.wide} zig={p.zig} /></PenSlot>
        ))}
        <Slot $w={60}><Plus size={32} strokeWidth={1.2} color="#3aa857" /></Slot>
        <ToolSep />
        <TextTool $w={135}><ShapesIcon />Shapes</TextTool>
        <TextTool $w={180}><InkShapeIcon />Ink to Shape</TextTool>
        <TextTool $w={162} $off><InkTextIcon />Ink to Text</TextTool>
        <TextTool $w={120}><RulerIcon />Ruler</TextTool>
      </ToolRow>
    </Ribbon>
    <Body>
      <Rail>
        <RailIcon><LibraryIcon /></RailIcon>
        <RailIcon><SearchGlass /></RailIcon>
        <RailIcon><ClockIcon /></RailIcon>
      </Rail>
      <NoteCanvas />
    </Body>
    <Taskbar>
      <TaskItem $w={73}><WinLogo /></TaskItem>
      <SearchBox><SearchGlass size={26} color="#222" />Type here to search</SearchBox>
      <TaskItem $w={70}><CortanaRing /></TaskItem>
      <TaskItem $w={74}><TaskViewIcon /></TaskItem>
      <TaskItem $w={60} $ml={12} $open><EdgeIcon /></TaskItem>
      <TaskItem $w={60} $ml={14}><FolderIcon /></TaskItem>
      <TaskItem $w={60} $ml={13}><NoteIcon /></TaskItem>
      <TaskItem $w={61} $ml={17} $open><WordpadIcon /></TaskItem>
      <TaskItem $w={73} $ml={8} $open $active><OneNoteIcon /></TaskItem>
      <TaskItem $w={61} $ml={8} $open><FlowerIcon /></TaskItem>
      <TaskItem $w={50} $ml={41}><WeatherIcon /></TaskItem>
      <TaskItem $w={43} $ml={5}><TrayText $fs={20}>18°C</TrayText></TaskItem>
      <TaskItem $w={40} $ml={22}><ChevronUp size={26} strokeWidth={1.2} /></TaskItem>
      <TaskItem $w={40} $ml={8}><MeetIcon /></TaskItem>
      <TaskItem $w={40} $ml={7}><CloudIcon /></TaskItem>
      <TaskItem $w={40} $ml={7}><MicIcon /></TaskItem>
      <TaskItem $w={40} $ml={9}><BatteryIcon /></TaskItem>
      <TaskItem $w={40} $ml={11}><WifiIcon /></TaskItem>
      <TaskItem $w={40} $ml={5}><VolumeIcon /></TaskItem>
      <TaskItem $w={34} $ml={14}><TrayText>ENG</TrayText></TaskItem>
      <TaskItem $w={100} $ml={17}>
        <ClockBox><span>08:26</span><span>05-01-2022</span></ClockBox>
      </TaskItem>
      <TaskItem $w={50} $ml={18}>
        <NotifIcon />
        <NotifBadge>16</NotifBadge>
      </TaskItem>
    </Taskbar>
    <MeetPanel>
      <Grip $m="3px 0 0" />
      <PanelRow $h={29}>
        <BackBtn><ArrowLeft size={15} strokeWidth={3.2} /></BackBtn>
      </PanelRow>
      <PanelRow $h={45}><RoundBtn $red><MicOff /></RoundBtn></PanelRow>
      <PanelRow $h={45}><RoundBtn><WindowsIcon /></RoundBtn></PanelRow>
      <PanelRow $h={44} $last><RoundBtn><HandIcon /></RoundBtn></PanelRow>
      <Grip $m="0" />
    </MeetPanel>
  </Win>
);

export default App;
